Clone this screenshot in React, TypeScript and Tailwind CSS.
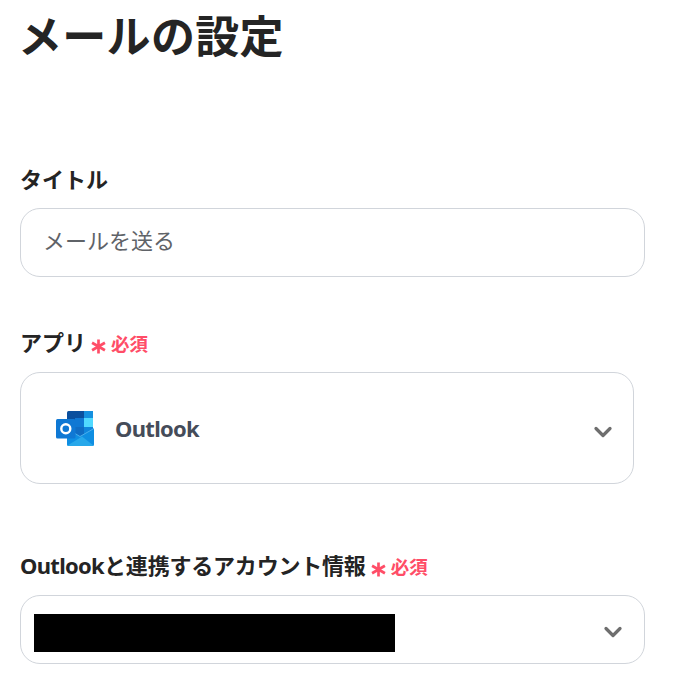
import { ChevronDown } from 'lucide-react';

const font = "font-['Noto_Sans','Noto_Sans_CJK_JP',sans-serif]";

function Required() {
  return (
    <span className="ml-[5px] flex items-center gap-[5px] pt-[5px] text-[#ff4d67]">
      <svg viewBox="0 0 14 14" className="mt-[3px] h-[15px] w-[15px]" fill="none" stroke="currentColor" strokeWidth="2.5">
        <path d="M7 0.5V13.5M1 3.5L13 10.5M13 3.5L1 10.5" />
      </svg>
      <span className="text-[18.5px] font-bold leading-none">必須</span>
    </span>
  );
}

function OutlookLogo() {
  return (
    <svg viewBox="0 0 38 35" className="h-[35px] w-[38px]">
      <rect x="11" y="0" width="26" height="28" rx="1.5" fill="#0a4f9e" />
      <rect x="28" y="0" width="9" height="7" fill="#1490df" />
      <rect x="19" y="7" width="9" height="9" fill="#0f78d4" />
      <rect x="28" y="7" width="9" height="9" fill="#50d9ff" />
      <rect x="19" y="16" width="9" height="11" fill="#0f6cc4" />
      <rect x="28" y="16" width="9" height="9" fill="#0f85dc" />
      <path d="M11 18L24 25.5L38 17.5V33.5a1.5 1.5 0 0 1-1.5 1.5H12.5a1.5 1.5 0 0 1-1.5-1.5z" fill="#0f8ee2" />
      <path d="M11.5 34.5L26 25.5L37.5 34.5a1.5 1.5 0 0 1-1 .5H12.5z" fill="#28a8ea" />
      <path d="M19 22.5L24 25.5L38 17.5" fill="none" stroke="#5ab9f0" strokeWidth="0.8" />
      <rect x="0" y="8" width="19.5" height="19.5" rx="1.5" fill="#0f78d4" />
      <circle cx="9.8" cy="17.8" r="4.5" fill="none" stroke="#fff" strokeWidth="2.4" />
    </svg>
  );
}

export default function App() {
  return (
    <div className={`${font} h-[677px] w-[675px] overflow-hidden bg-white pl-5 text-[#242424]`}>
      <h1 className="-ml-[2px] pt-[10px] text-[44px] font-bold leading-[52px] tracking-[0.3px]">メールの設定</h1>

      <label className="mt-[101px] block text-[22px] font-bold leading-8">タイトル</label>
      <div className="mt-[13px] flex h-[69px] w-[625px] items-center rounded-[20px] border border-[#d1d5db] pb-1 pl-[22px] text-[22px] text-[#5f6368]">
        メールを送る
      </div>

      <div className="mt-[49px] flex h-8 items-center">
        <span className="text-[22px] font-bold leading-8">アプリ</span>
        <Required />
      </div>
      <div className="mt-[14px] flex h-[112px] w-[614px] items-center rounded-[20px] border border-[#d1d5db] pl-[35px] pr-[16px]">
        <OutlookLogo />
        <span className="ml-[21px] text-[22px] font-bold tracking-[-0.7px] text-[#454c59]">Outlook</span>
        <ChevronDown className="ml-auto mt-[8px] h-[28px] w-[28px] text-[#6e6e6e]" strokeWidth={2.8} />
      </div>

      <div className="mt-[65px] flex h-8 items-center">
        <span className="text-[22px] font-bold leading-8 tracking-[-0.2px]">
          <span className="tracking-[-0.7px]">Outlook</span>と連携するアカウント情報
        </span>
        <Required />
      </div>
      <div className="mt-[14px] flex h-[69px] w-[625px] items-center rounded-[20px] border border-[#d1d5db] pl-[13px] pr-[17px] pt-1">
        <div className="mt-[2px] h-[38px] w-[361px] bg-black" />
        <ChevronDown className="ml-auto h-[28px] w-[28px] text-[#6e6e6e]" strokeWidth={2.8} />
      </div>
    </div>
  );
}
